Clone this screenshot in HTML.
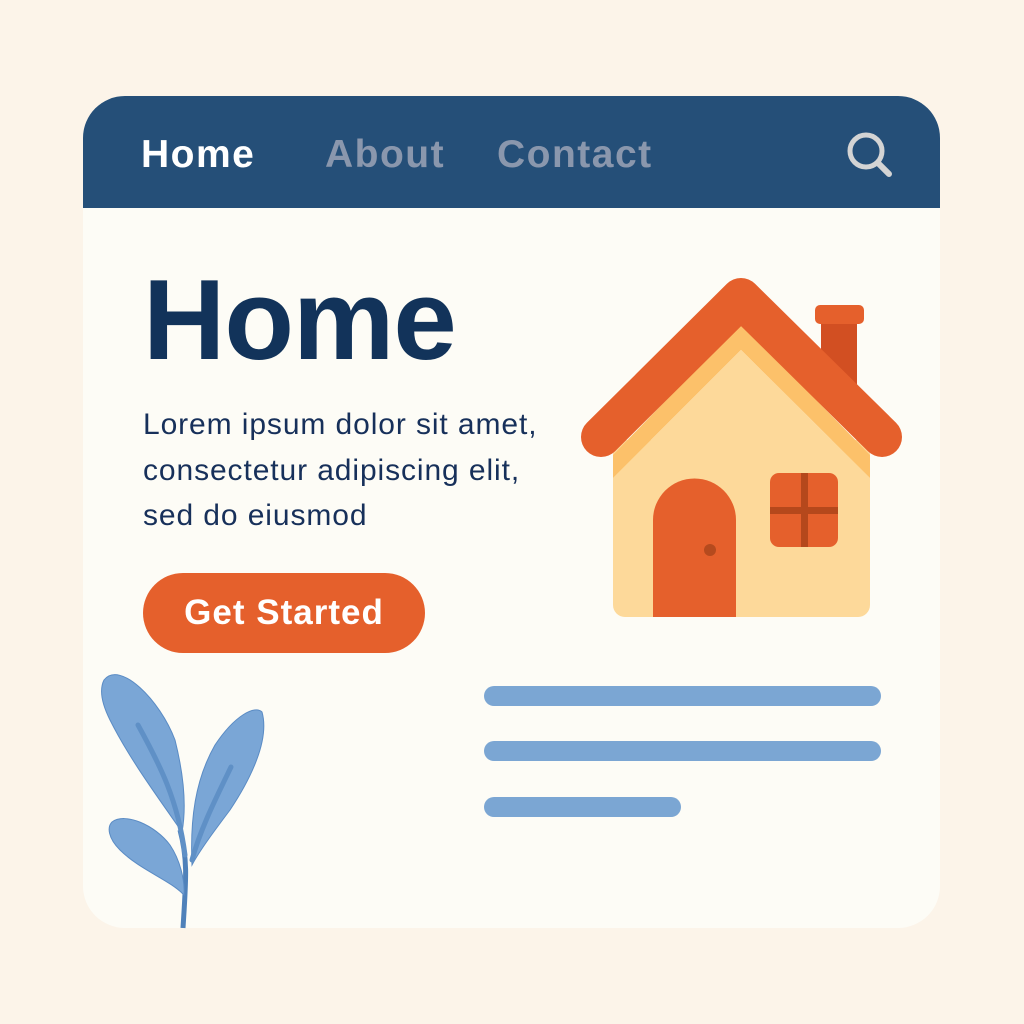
<!DOCTYPE html>
<html><head><style>
body{margin:0;background:#fcf4e9;width:1024px;height:1024px;position:relative;overflow:hidden;font-family:"Liberation Sans",sans-serif}
.card{position:absolute;left:83px;top:96px;width:857px;height:832px;background:#fdfcf6;border-radius:42px;overflow:hidden}
.nav{position:absolute;left:0;top:0;width:857px;height:112px;background:#254f78}
.nav span{position:absolute;top:37px;font-size:39px;font-weight:bold;color:#8a97ad;letter-spacing:1.5px}
h1{position:absolute;left:60px;top:168px;margin:0;font-size:114px;color:#12335a;letter-spacing:-1px;line-height:1}
p{position:absolute;left:60px;top:306px;margin:0;font-size:30px;line-height:45.5px;color:#17305a;letter-spacing:0.9px}
.btn{position:absolute;left:60px;top:477px;width:282px;height:80px;border-radius:40px;background:#e5602c;color:#fff;font-size:35px;font-weight:bold;text-align:center;line-height:80px;letter-spacing:1px}
.ln{position:absolute;left:401px;height:20px;border-radius:10px;background:#7ba6d3}
</style></head><body>
<div class="card">
<div class="nav">
<span style="left:58px;color:#fff">Home</span>
<span style="left:242px">About</span>
<span style="left:414px">Contact</span>
</div>
<h1>Home</h1>
<p>Lorem ipsum dolor sit amet,<br>consectetur adipiscing elit,<br>sed do eiusmod</p>
<div class="btn">Get Started</div>
<div class="ln" style="top:590px;width:397px"></div>
<div class="ln" style="top:645px;width:397px"></div>
<div class="ln" style="top:701px;width:197px"></div>
</div>
<svg width="1024" height="1024" style="position:absolute;left:0;top:0">
<circle cx="866" cy="151" r="16" fill="none" stroke="#d4d4d4" stroke-width="5"/>
<line x1="878" y1="163" x2="889" y2="174" stroke="#d4d4d4" stroke-width="6" stroke-linecap="round"/>
<rect x="821" y="318" width="36" height="80" fill="#d24f22"/>
<rect x="815" y="305" width="49" height="19" rx="5" fill="#e5602c"/>
<rect x="613" y="440" width="257" height="177" rx="12" fill="#fdd99a"/>
<polygon points="613,455 741,323 870,455 870,478 741,350 613,478" fill="#fcc16a"/>
<polygon points="613,478 741,350 870,478 870,500 613,500" fill="#fdd99a"/>
<polyline points="601,437 741,298 882,437" fill="none" stroke="#e5602c" stroke-width="40" stroke-linecap="round" stroke-linejoin="round"/>
<path d="M653,617 V520 A41.5,41.5 0 0 1 736,520 V617 Z" fill="#e5602c"/>
<circle cx="710" cy="550" r="6" fill="#b54a1e"/>
<rect x="770" y="473" width="68" height="74" rx="9" fill="#e5602c"/>
<rect x="801" y="473" width="7" height="74" fill="#b5481c"/>
<rect x="770" y="507" width="68" height="7" fill="#b5481c"/>
<path d="M183,928 C186,880 188,860 180,830" fill="none" stroke="#4f81ba" stroke-width="5"/>
<path d="M104,680 C120,660 160,700 175,740 C185,780 186,810 182,832 C160,800 130,760 110,720 C100,700 100,688 104,680Z" fill="#7aa6d6" stroke="#5a8bc4" stroke-width="1"/>
<path d="M138,725 C160,765 178,800 185,855" fill="none" stroke="#5f90c6" stroke-width="5" stroke-linecap="round"/>
<path d="M262,712 C270,740 250,780 230,810 C215,830 200,850 192,865 C190,820 195,780 215,745 C235,715 255,705 262,712Z" fill="#7aa6d6" stroke="#5a8bc4" stroke-width="1"/>
<path d="M231,767 C215,800 200,830 192,860" fill="none" stroke="#5f90c6" stroke-width="5" stroke-linecap="round"/>
<path d="M112,822 C125,812 155,825 170,845 C180,860 185,880 184,895 C170,880 140,870 120,850 C108,838 107,827 112,822Z" fill="#7aa6d6" stroke="#5a8bc4" stroke-width="1"/>
</svg>
</body></html>
